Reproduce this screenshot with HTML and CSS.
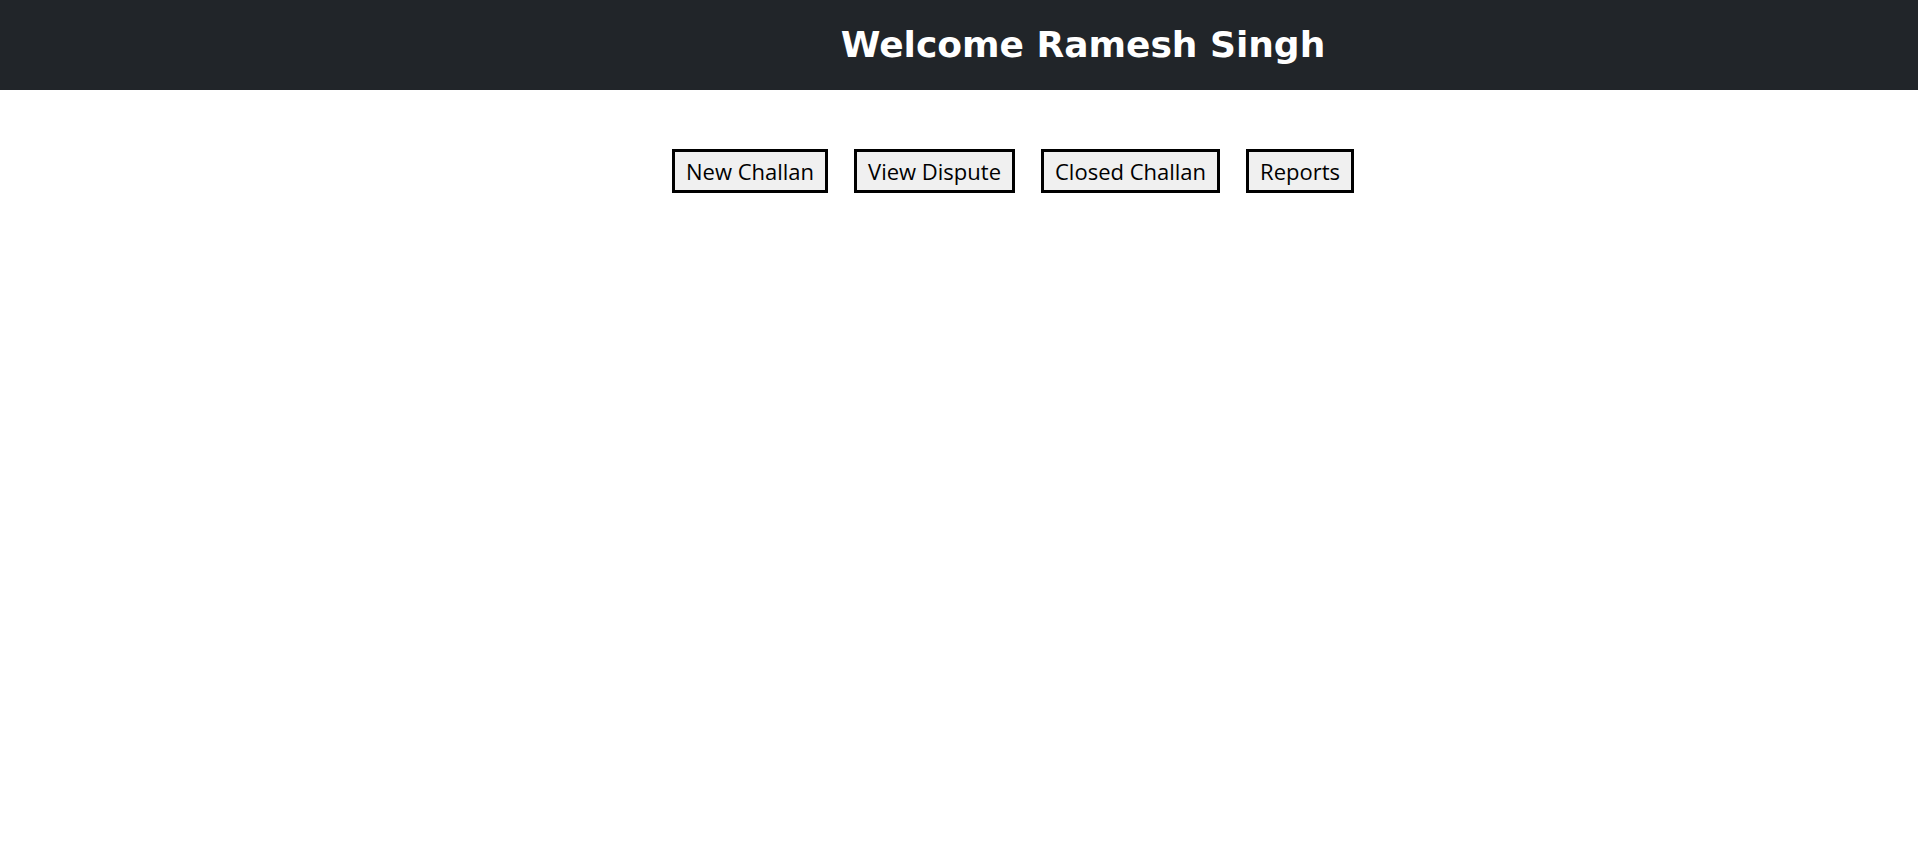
FILE: index.html
```html
<!DOCTYPE html>
<html lang="en">
<head>
<meta charset="utf-8">
<title>Welcome</title>
<link rel="stylesheet" href="styles.css">
</head>
<body>
<header class="topbar">
  <h1 class="title">Welcome Ramesh Singh</h1>
</header>
<nav class="actions">
  <button class="btn">New Challan</button>
  <button class="btn">View Dispute</button>
  <button class="btn">Closed Challan</button>
  <button class="btn">Reports</button>
</nav>
</body>
</html>
```
FILE: styles.css
```css
html, body {
  margin: 0;
  padding: 0;
  background: #ffffff;
}
.topbar {
  height: 90px;
  background: #212529;
  display: flex;
  align-items: center;
  justify-content: center;
  padding-left: 248px;
}
.title {
  margin: 0;
  color: #ffffff;
  font-family: "DejaVu Sans", Verdana, sans-serif;
  font-weight: bold;
  font-size: 36px;
  line-height: 1;
}
.actions {
  display: flex;
  justify-content: center;
  gap: 26px;
  margin-top: 59px;
  padding-left: 108px;
}
.btn {
  font-family: "Open Sans", "Noto Sans", sans-serif;
  font-size: 22px;
  color: #000;
  background: #f0f0f0;
  border: 3px solid #000;
  border-radius: 0;
  padding: 6px 11px;
  line-height: 26px;
  margin: 0;
}
```
